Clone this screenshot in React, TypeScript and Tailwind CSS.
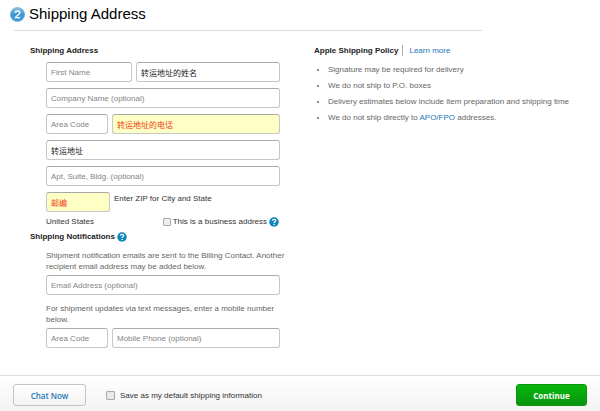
import { useState } from "react";

type FieldProps = {
    label: string;
    initial?: string;
    className?: string;
    highlighted?: boolean;
};

const notes = ["Signature may be required for delivery", "We do not ship to P.O. boxes", "Delivery estimates below include item preparation and shipping time"];

function Field({ label, initial = "", className = "", highlighted = false }: FieldProps) {
    const [value, setValue] = useState(initial);

    return (
        <input
            type="text"
            aria-label={label}
            placeholder={label}
            value={value}
            onChange={(e) => setValue(e.target.value)}
            className={`h-5 min-w-0 rounded-[3px] border border-[#c6c6c6] border-t-[#a9a9a9] px-1 outline-none placeholder:text-[#858585] focus:border-[#1a7fc0] ${highlighted ? "bg-[#feffc4] text-[#f03c14]" : "bg-white text-[#222222]"} ${className}`}
        />
    );
}

function HelpButton({ label }: { label: string }) {
    return (
        <button type="button" aria-label={label} className="shrink-0">
            <svg viewBox="0 0 20 20" className="size-[10px]">
                <circle cx="10" cy="10" r="9.5" fill="#0a86b8" />
                <path d="M6.8 7.6C7 5.5 8.3 4.6 10.1 4.6c1.9 0 3.3 1 3.3 2.8 0 2.2-3.2 2.4-3.2 4.7" fill="none" stroke="#fff" strokeWidth="2.4" />
                <circle cx="10.2" cy="15" r="1.5" fill="#fff" />
            </svg>
        </button>
    );
}

function StepBadge() {
    return (
        <svg viewBox="0 0 28 28" className="size-[15px] shrink-0" role="img" aria-label="Step 2">
            <defs>
                <linearGradient id="badge" x1="0" y1="0" x2="0" y2="1">
                    <stop offset="0" stopColor="#8cc6ea" />
                    <stop offset="0.5" stopColor="#3f97cf" />
                    <stop offset="1" stopColor="#3fa0dc" />
                </linearGradient>
            </defs>
            <circle cx="14" cy="14" r="13.2" fill="url(#badge)" stroke="#4d9acb" strokeWidth="1" />
            <path d="M9.8 10.8C10.2 8.4 11.8 7.4 14 7.4c2.5 0 4.3 1.3 4.3 3.5 0 3.6-6.8 5-8.1 8.9h8.5" fill="none" stroke="#fff" strokeWidth="2.6" />
        </svg>
    );
}

export default function App() {
    const [business, setBusiness] = useState(false);
    const [saveDefault, setSaveDefault] = useState(false);

    return (
        <div className="flex min-h-screen flex-col bg-white font-['Liberation_Sans','Noto_Sans_CJK_SC',sans-serif] text-[8px] leading-[11px] text-[#666666]">
            <header className="flex items-center gap-1 px-[10px] pt-1">
                <StepBadge />
                <h1 className="text-[15px] leading-5 text-black">Shipping Address</h1>
            </header>
            <div className="ml-[14px] mt-[6px] w-[78%] border-t border-[#dddddd]" />

            <main className="flex gap-[34px] px-[30px] pb-6 pt-[14px]">
                <form className="w-[250px] shrink-0">
                    <h2 className="font-bold text-[#222222]">Shipping Address</h2>
                    <div className="mt-[6px] flex flex-col gap-[6px] pl-4">
                        <div className="flex gap-1">
                            <Field label="First Name" className="w-[86px]" />
                            <Field label="Last Name" initial="转运地址的姓名" className="flex-1" />
                        </div>
                        <Field label="Company Name (optional)" />
                        <div className="flex gap-1">
                            <Field label="Area Code" className="w-[62px]" />
                            <Field label="Phone" initial="转运地址的电话" highlighted className="flex-1" />
                        </div>
                        <Field label="Street Address" initial="转运地址" />
                        <Field label="Apt, Suite, Bldg. (optional)" />
                        <div className="flex gap-1">
                            <Field label="ZIP" initial="邮编" highlighted className="w-16" />
                            <p className="pt-px text-[#333333]">Enter ZIP for City and State</p>
                        </div>
                    </div>
                    <div className="mt-1 flex items-center justify-between pl-4 text-[#333333]">
                        <span>United States</span>
                        <div className="flex items-center gap-[2px] pr-px">
                            <label className="flex items-center gap-[2px]">
                                <input
                                    type="checkbox"
                                    checked={business}
                                    onChange={(e) => setBusiness(e.target.checked)}
                                    className="size-2 appearance-none rounded-[1px] border border-[#aaaaaa] bg-[#eeeeee] checked:bg-[#1a7fc0]"
                                />
                                This is a business address
                            </label>
                            <HelpButton label="About business addresses" />
                        </div>
                    </div>

                    <div className="mt-1 flex items-center gap-[2px]">
                        <h2 className="font-bold text-[#222222]">Shipping Notifications</h2>
                        <HelpButton label="About shipping notifications" />
                    </div>
                    <div className="mt-2 flex flex-col pl-4">
                        <p className="-mr-3">Shipment notification emails are sent to the Billing Contact. Another recipient email address may be added below.</p>
                        <Field label="Email Address (optional)" className="mt-[3px]" />
                        <p className="mt-2">For shipment updates via text messages, enter a mobile number below.</p>
                        <div className="mt-[3px] flex gap-1">
                            <Field label="Area Code" className="w-[62px]" />
                            <Field label="Mobile Phone (optional)" className="flex-1" />
                        </div>
                    </div>
                </form>

                <aside className="min-w-0 flex-1">
                    <div className="flex">
                        <h2 className="font-bold text-[#222222]">Apple Shipping Policy</h2>
                        <a href="#policy" className="ml-1 border-l border-[#aaaaaa] pl-[6px] text-[#1a76b8]">Learn more</a>
                    </div>
                    <ul className="mt-2 list-disc space-y-[5px] pl-[14px]">
                        {notes.map((note) => (
                            <li key={note}>{note}</li>
                        ))}
                        <li>
                            We do not ship directly to <a href="#apo" className="text-[#1a76b8]">APO/FPO</a> addresses.
                        </li>
                    </ul>
                </aside>
            </main>

            <footer className="mt-auto flex items-center border-t border-[#dddddd] bg-linear-to-b from-white to-[#f3f3f3] px-[13px] pb-[5px] pt-2">
                <button type="button" className="h-[22px] w-[73px] rounded-[3px] border border-[#c4c4c4] bg-linear-to-b from-white to-[#f3f3f3] font-['Open_Sans',sans-serif] font-semibold text-[#1a76b8]">
                    Chat Now
                </button>
                <label className="ml-5 flex items-center gap-[5px] text-[#333333]">
                    <input
                        type="checkbox"
                        checked={saveDefault}
                        onChange={(e) => setSaveDefault(e.target.checked)}
                        className="size-[9px] appearance-none rounded-[1px] border border-[#aaaaaa] bg-[#e8e8e8] checked:bg-[#1a7fc0]"
                    />
                    Save as my default shipping information
                </label>
                <button type="submit" className="ml-auto h-[22px] w-[71px] rounded-[3px] border border-[#0a9410] bg-linear-to-b from-[#08b80a] to-[#08940f] font-['Open_Sans',sans-serif] font-bold text-white">
                    Continue
                </button>
            </footer>
        </div>
    );
}
